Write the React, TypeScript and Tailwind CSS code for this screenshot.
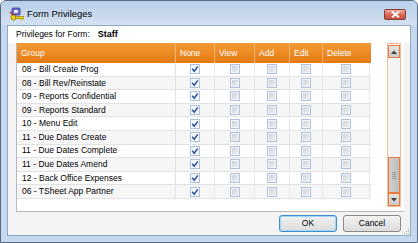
import React from "react";

const rows = [
  "08 - Bill Create Prog",
  "08 - Bill Rev/Reinstate",
  "09 - Reports Confidential",
  "09 - Reports Standard",
  "10 - Menu Edit",
  "11 - Due Dates Create",
  "11 - Due Dates Complete",
  "11 - Due Dates Amend",
  "12 - Back Office Expenses",
  "06 - TSheet App Partner",
];

const cols = [
  { name: "None", w: "w-[39px]" },
  { name: "View", w: "w-[40px]" },
  { name: "Add", w: "w-[35px]" },
  { name: "Edit", w: "w-[33px]" },
  { name: "Delete", w: "w-[47px]" },
];

function Box({ checked }: { checked: boolean }) {
  return (
    <div
      className={
        "w-[10px] h-[10px] border border-[#aec2de] flex items-center justify-center " +
        (checked
          ? "bg-[#f4f7fb]"
          : "bg-[#f2f4f7] p-[1px]")
      }
    >
      {checked ? (
        <svg width="8" height="8" viewBox="0 0 8 8">
          <path d="M1.2 3.8 L3.2 6.2 L6.8 1.4" stroke="#2c4f9a" strokeWidth="1.5" fill="none" />
        </svg>
      ) : (
        <div className="w-full h-full bg-gradient-to-br from-[#cfd3d9] to-[#eceef1]" />
      )}
    </div>
  );
}

function AppIcon() {
  return (
    <svg width="16" height="16" viewBox="0 0 16 16">
      <rect x="3" y="2" width="8" height="7" rx="1" fill="#6a6ad0" stroke="#3a3a90" strokeWidth="0.8" />
      <rect x="5" y="4" width="4" height="3" fill="#e8e8ff" />
      <circle cx="4.5" cy="11.5" r="2.6" fill="#f2d21a" stroke="#8a7400" strokeWidth="0.8" />
      <rect x="6.5" y="10.6" width="8" height="2" fill="#f2d21a" stroke="#8a7400" strokeWidth="0.6" />
      <rect x="11.5" y="12.3" width="1.4" height="2" fill="#d8b800" />
      <rect x="13.2" y="12.3" width="1.4" height="1.6" fill="#d8b800" />
      <path d="M1 6 L4 9" stroke="#c02020" strokeWidth="1.2" />
    </svg>
  );
}

export default function App() {
  return (
    <div
      className="w-[418px] h-[243px] bg-[#c5d8ee] border border-[#5a6a80] rounded-t-[6px] flex flex-col overflow-hidden"
      style={{ fontFamily: '"Liberation Sans", Arial, sans-serif' }}
    >
      {/* title bar */}
      <div className="h-[24px] flex items-center pl-[8px] pr-[11px] pt-[2px] bg-gradient-to-b from-[#b9cfe9] to-[#d3e1f1]">
        <AppIcon />
        <span className="ml-[2px] text-[9.4px] text-black">Form Privileges</span>
        <div className="ml-auto w-[22px] h-[11px] rounded-[2px] border border-[#8a3a32] bg-gradient-to-b from-[#eeb3a8] via-[#d8685a] to-[#c85446] flex items-center justify-center">
          <svg width="9" height="7" viewBox="0 0 9 7">
            <path d="M1 0.8 L8 6.2 M8 0.8 L1 6.2" stroke="#ffffff" strokeWidth="1.8" />
          </svg>
        </div>
      </div>

      {/* client */}
      <div className="mx-[6px] mb-[6px] flex-1 border border-[#8fa9c8] bg-[#f3f3f3] flex flex-col">
        <div className="h-[17px] bg-white flex items-center pl-[8px] text-[8.5px] text-black">
          <span>Privileges for Form:</span>
          <span className="ml-[8px] font-bold text-[9px]">Staff</span>
        </div>

        {/* grid */}
        <div className="ml-[8px] mr-[6px] h-[169px] bg-white border-l border-b border-[#b8b8b8] flex">
          <div className="w-[354px] flex flex-col">
            <div className="h-[20px] flex bg-gradient-to-b from-[#f49a32] to-[#e57a10] text-white text-[8.5px]">
              <div className="w-[159px] flex items-center pl-[4px] border-r border-[#f5b772]">Group</div>
              {cols.map((c) => (
                <div key={c.name} className={c.w + " flex items-center pl-[4px] border-r border-[#f5b772] last:border-r-0"}>
                  {c.name}
                </div>
              ))}
            </div>
            {rows.map((r, i) => (
              <div
                key={r}
                className={
                  "h-[13.6px] flex border-b border-[#e2e2e2] text-[8.5px] text-black " +
                  (i % 2 === 1 ? "bg-[#f6f6f6]" : "bg-white")
                }
              >
                <div className="w-[159px] flex items-center pl-[5px] border-r border-[#e2e2e2]">{r}</div>
                {cols.map((c, j) => (
                  <div key={c.name} className={c.w + " flex items-center justify-center border-r border-[#e8e8e8]"}>
                    <Box checked={j === 0} />
                  </div>
                ))}
              </div>
            ))}
          </div>
          <div className="flex-1" />
          {/* scrollbar */}
          <div className="w-[14px] h-[164px] mr-[3px] border border-[#f7bd96] bg-[#f4f4f4] flex flex-col">
            <div className="h-[13px] border border-[#ee7a3a] bg-gradient-to-b from-[#e4e4e4] to-[#c9c9c9] flex items-center justify-center mt-[1px]">
              <svg width="6" height="4" viewBox="0 0 6 4">
                <path d="M0 4 L3 0.5 L6 4 Z" fill="#404040" />
              </svg>
            </div>
            <div className="flex-1" />
            <div className="h-[36px] border border-[#ee7a3a] bg-gradient-to-r from-[#cfcfcf] to-[#bdbdbd] flex items-center justify-center">
              <div className="flex flex-col gap-[1px]">
                <div className="w-[4px] h-[1px] bg-[#9a9a9a]" />
                <div className="w-[4px] h-[1px] bg-[#9a9a9a]" />
                <div className="w-[4px] h-[1px] bg-[#9a9a9a]" />
                <div className="w-[4px] h-[1px] bg-[#9a9a9a]" />
              </div>
            </div>
            <div className="h-[13px] border border-[#ee7a3a] bg-gradient-to-b from-[#e4e4e4] to-[#c9c9c9] flex items-center justify-center">
              <svg width="6" height="4" viewBox="0 0 6 4">
                <path d="M0 0 L3 3.5 L6 0 Z" fill="#404040" />
              </svg>
            </div>
          </div>
        </div>

        {/* buttons */}
        <div className="flex-1 flex items-center justify-end pr-[9px] gap-[6px] relative">
          <button className="w-[58px] h-[17px] rounded-[3px] border border-[#3c8fd0] bg-gradient-to-b from-[#f2f2f2] to-[#dcdcdc] text-[8.5px] text-black shadow-[inset_0_0_0_1px_#9fd6f6]">
            OK
          </button>
          <button className="w-[58px] h-[17px] rounded-[3px] border border-[#8a8a8a] bg-gradient-to-b from-[#f2f2f2] to-[#dcdcdc] text-[8.5px] text-black">
            Cancel
          </button>
          <div className="absolute right-[1px] bottom-[1px] grid grid-cols-3 gap-[1px]">
            <div className="w-[1px] h-[1px]" />
            <div className="w-[1px] h-[1px]" />
            <div className="w-[1px] h-[1px] bg-[#a0a0a0]" />
            <div className="w-[1px] h-[1px]" />
            <div className="w-[1px] h-[1px] bg-[#a0a0a0]" />
            <div className="w-[1px] h-[1px] bg-[#a0a0a0]" />
            <div className="w-[1px] h-[1px] bg-[#a0a0a0]" />
            <div className="w-[1px] h-[1px] bg-[#a0a0a0]" />
            <div className="w-[1px] h-[1px] bg-[#a0a0a0]" />
          </div>
        </div>
      </div>
    </div>
  );
}
